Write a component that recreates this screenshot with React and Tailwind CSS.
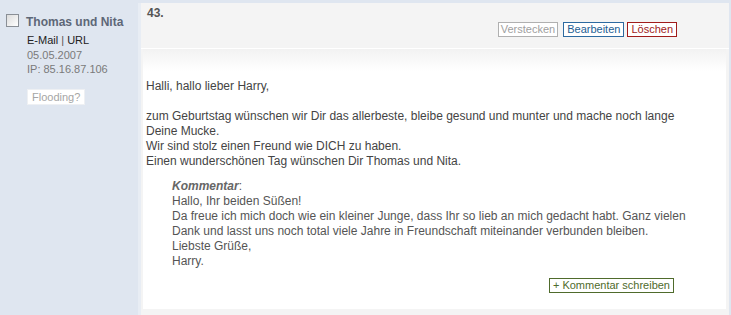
export default function App() {
  return (
    <div className="flex w-[731px] h-[315px] bg-[#dfe6f0] overflow-hidden" style={{ fontFamily: '"Liberation Sans", Arial, sans-serif' }}>
      {/* Sidebar */}
      <div className="w-[138px] shrink-0 pt-[14px] pl-[6px]">
        <div className="flex items-start">
          <div className="w-[13px] h-[13px] border border-[#8a8f96] bg-[linear-gradient(135deg,#dcdcdc,#ffffff)]" />
          <div className="ml-[7px] text-[12px] font-bold text-[#5d6777] leading-[15px] mt-[1px]">Thomas und Nita</div>
        </div>
        <div className="pl-[21px] mt-[3px] text-[11px] leading-[14.5px]">
          <div className="text-[#222]">E-Mail <span className="text-[#555]">|</span> URL</div>
          <div className="text-[#7a7a7a]">05.05.2007</div>
          <div className="text-[#7a7a7a]">IP: 85.16.87.106</div>
          <div className="mt-[12px] inline-block bg-white border border-[#eef0f3] px-[4px] text-[#a5a5a5] leading-[14px] h-[16px]">Flooding?</div>
        </div>
      </div>
      {/* strip */}
      <div className="w-[3px] shrink-0 mt-[3px] bg-[#e8edf4]" />
      {/* Main */}
      <div className="flex-1 mt-[3px] mr-[2px] bg-[#f4f4f4] flex flex-col">
        <div className="h-[45px] shrink-0 pl-[6px] pr-[52px]">
          <div className="pt-[3px] text-[12px] font-bold text-[#555] leading-[14px]">43.</div>
          <div className="flex justify-end mt-[2px] text-[11px] leading-[13px]">
            <span className="border border-[#b0b0b0] text-[#a0a0a0] bg-white px-[2px] h-[15px]">Verstecken</span>
            <span className="ml-[5px] border border-[#2d6aa0] text-[#245e94] bg-white px-[3px] h-[15px]">Bearbeiten</span>
            <span className="ml-[3px] border border-[#a01c1c] text-[#a01c1c] bg-white px-[3px] h-[15px]">Löschen</span>
          </div>
        </div>
        <div className="h-[1px] bg-white" />
        <div className="flex-1 ml-[2px] mr-[3px] mb-[6px] bg-[linear-gradient(to_bottom,#f2f2f2_0px,#ffffff_22px,#ffffff_100%)] pt-[30px] pl-[3px] pr-[4px] text-[12px] leading-[15px] text-[#444]">
          <div>Halli, hallo lieber Harry,</div>
          <div className="mt-[15px] pr-[24px]">zum Geburtstag wünschen wir Dir das allerbeste, bleibe gesund und munter und mache noch lange Deine Mucke.</div>
          <div>Wir sind stolz einen Freund wie DICH zu haben.</div>
          <div>Einen wunderschönen Tag wünschen Dir Thomas und Nita.</div>
          <div className="mt-[10px] ml-[26px] pr-[24px] text-[#555]">
            <div><span className="font-bold italic text-[#666]">Kommentar</span>:</div>
            <div>Hallo, Ihr beiden Süßen!</div>
            <div>Da freue ich mich doch wie ein kleiner Junge, dass Ihr so lieb an mich gedacht habt. Ganz vielen Dank und lasst uns noch total viele Jahre in Freundschaft miteinander verbunden bleiben.</div>
            <div>Liebste Grüße,</div>
            <div>Harry.</div>
          </div>
          <div className="flex justify-end pr-[48px] mt-[9px]">
            <span className="border border-[#4f6b2c] text-[#4f6b2c] bg-white px-[3px] text-[11px] leading-[13px] h-[15px]">+ Kommentar schreiben</span>
          </div>
        </div>
      </div>
    </div>
  );
}
